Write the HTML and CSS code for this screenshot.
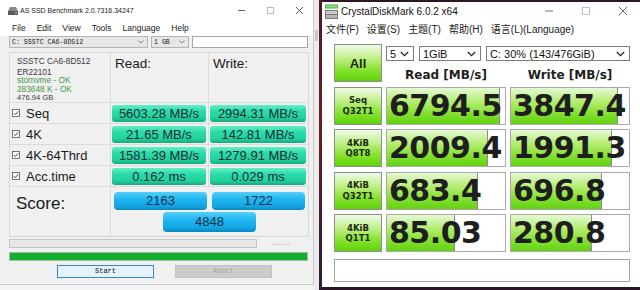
FILE: index.html
```html
<!DOCTYPE html>
<html>
<head>
<meta charset="utf-8">
<title>Benchmarks</title>
<link rel="stylesheet" href="styles.css">
</head>
<body>
<div class="desk">
  <div class="left">
    <section class="asw">
      <header class="tb">
        <svg class="asicon" viewBox="0 0 10 9"><path d="M2 1h6l2 4H0z" fill="#8a8a8a"/><rect x="0" y="5" width="10" height="4" fill="#5a5a5a"/><rect x="7" y="6.5" width="2" height="1" fill="#ccc"/></svg>
        <span class="ttl">AS SSD Benchmark 2.0.7316.34247</span>
        <span class="ctl">
          <svg viewBox="0 0 7 7"><path d="M0 3.5h7" stroke="#333" stroke-width="0.8"/></svg>
          <svg viewBox="0 0 7 7"><rect x="0.5" y="0.5" width="6" height="6" fill="none" stroke="#999" stroke-width="0.7"/></svg>
          <svg viewBox="0 0 7 7"><path d="M0 0L7 7M7 0L0 7" stroke="#333" stroke-width="0.8"/></svg>
        </span>
      </header>
      <nav class="menu"><span>File</span><span>Edit</span><span>View</span><span>Tools</span><span>Language</span><span>Help</span></nav>
      <div class="combos">
        <div class="cb drive"><span>C: SSSTC CA6-8D512</span><svg viewBox="0 0 6 4"><path d="M0.5 0.5L3 3L5.5 0.5" fill="none" stroke="#666" stroke-width="0.8"/></svg></div>
        <div class="cb size"><span>1 GB</span><svg viewBox="0 0 6 4"><path d="M0.5 0.5L3 3L5.5 0.5" fill="none" stroke="#666" stroke-width="0.8"/></svg></div>
        <div class="tf"></div>
      </div>
      <div class="panel">
        <div class="info">
          <div class="model">SSSTC CA6-8D512</div>
          <div>ER22101</div>
          <div class="ok">stornvme - OK</div>
          <div class="ok">283648 K - OK</div>
          <div class="cap">476.94 GB</div>
        </div>
        <div class="hd">Read:</div>
        <div class="hd">Write:</div>

        <div class="lbl"><svg class="chk" viewBox="0 0 8 8"><rect x="0.5" y="0.5" width="7" height="7" fill="#fff" stroke="#555" stroke-width="0.8"/><path d="M1.8 4L3.4 5.6L6.3 2.2" fill="none" stroke="#333" stroke-width="0.9"/></svg>Seq</div>
        <div class="cell"><div class="val">5603.28 MB/s</div></div>
        <div class="cell"><div class="val">2994.31 MB/s</div></div>

        <div class="lbl"><svg class="chk" viewBox="0 0 8 8"><rect x="0.5" y="0.5" width="7" height="7" fill="#fff" stroke="#555" stroke-width="0.8"/><path d="M1.8 4L3.4 5.6L6.3 2.2" fill="none" stroke="#333" stroke-width="0.9"/></svg>4K</div>
        <div class="cell"><div class="val">21.65 MB/s</div></div>
        <div class="cell"><div class="val">142.81 MB/s</div></div>

        <div class="lbl"><svg class="chk" viewBox="0 0 8 8"><rect x="0.5" y="0.5" width="7" height="7" fill="#fff" stroke="#555" stroke-width="0.8"/><path d="M1.8 4L3.4 5.6L6.3 2.2" fill="none" stroke="#333" stroke-width="0.9"/></svg>4K-64Thrd</div>
        <div class="cell"><div class="val">1581.39 MB/s</div></div>
        <div class="cell"><div class="val">1279.91 MB/s</div></div>

        <div class="lbl"><svg class="chk" viewBox="0 0 8 8"><rect x="0.5" y="0.5" width="7" height="7" fill="#fff" stroke="#555" stroke-width="0.8"/><path d="M1.8 4L3.4 5.6L6.3 2.2" fill="none" stroke="#333" stroke-width="0.9"/></svg>Acc.time</div>
        <div class="cell"><div class="val">0.162 ms</div></div>
        <div class="cell"><div class="val">0.029 ms</div></div>

        <div class="score-l">Score:</div>
        <div class="scores">
          <div class="sc">2163</div>
          <div class="sc">1722</div>
          <div class="sc tot">4848</div>
        </div>
      </div>
      <div class="progrow"><div class="prog"></div><span class="eta">--:--:--</span></div>
      <div class="gbar"></div>
      <div class="btns"><div class="btn start">Start</div><div class="btn abort">Abort</div></div>
    </section>
  </div>
  <div class="gap"><i></i></div>
  <div class="wall"></div>
  <section class="cdm">
    <header class="ctb">
      <svg class="cicon" viewBox="0 0 13 15"><rect x="0" y="0.5" width="13" height="4" fill="#3fb43f"/><rect x="1" y="1.5" width="11" height="2" fill="#8ee08e"/><rect x="0" y="6" width="13" height="9" fill="#7a7a7a"/><rect x="1" y="7" width="11" height="3" fill="#c9c9c9"/><rect x="1" y="11" width="11" height="3" fill="#b5b5b5"/></svg>
      <span class="cttl">CrystalDiskMark 6.0.2 x64</span>
      <span class="cctl">
        <svg viewBox="0 0 8 8"><path d="M0 4h8" stroke="#444" stroke-width="0.8"/></svg>
        <svg viewBox="0 0 8 8"><rect x="0.5" y="0.5" width="7" height="7" fill="none" stroke="#aaa" stroke-width="0.7"/></svg>
        <svg viewBox="0 0 8 8"><path d="M0 0L8 8M8 0L0 8" stroke="#444" stroke-width="0.8"/></svg>
      </span>
    </header>
    <nav class="cmenu"><span>文件(F)</span><span>设置(S)</span><span>主题(T)</span><span>帮助(H)</span><span>语言(L)(Language)</span></nav>
    <div class="cbody">
      <div class="grid">
        <div class="btn-g all">All</div>
        <div class="top">
          <div class="sels">
            <div class="sel s1"><span>5</span><svg viewBox="0 0 9 6"><path d="M0.8 1L4.5 4.7L8.2 1" fill="none" stroke="#222" stroke-width="1.2"/></svg></div>
            <div class="sel s2"><span>1GiB</span><svg viewBox="0 0 9 6"><path d="M0.8 1L4.5 4.7L8.2 1" fill="none" stroke="#222" stroke-width="1.2"/></svg></div>
            <div class="sel s3"><span>C: 30% (143/476GiB)</span><svg viewBox="0 0 9 6"><path d="M0.8 1L4.5 4.7L8.2 1" fill="none" stroke="#222" stroke-width="1.2"/></svg></div>
          </div>
          <div class="heads"><span>Read [MB/s]</span><span>Write [MB/s]</span></div>
        </div>

        <div class="btn-g tl"><span>Seq</span><span>Q32T1</span></div>
        <div class="vbox"><div class="fill" style="width:113px"></div><div class="num">6794.5</div></div>
        <div class="vbox"><div class="fill" style="width:107px"></div><div class="num">3847.4</div></div>

        <div class="btn-g tl"><span>4KiB</span><span>Q8T8</span></div>
        <div class="vbox"><div class="fill" style="width:101px"></div><div class="num">2009.4</div></div>
        <div class="vbox"><div class="fill" style="width:101px"></div><div class="num">1991.3</div></div>

        <div class="btn-g tl"><span>4KiB</span><span>Q32T1</span></div>
        <div class="vbox"><div class="fill" style="width:91px"></div><div class="num">683.4</div></div>
        <div class="vbox"><div class="fill" style="width:91px"></div><div class="num">696.8</div></div>

        <div class="btn-g tl"><span>4KiB</span><span>Q1T1</span></div>
        <div class="vbox"><div class="fill" style="width:68px"></div><div class="num">85.03</div></div>
        <div class="vbox"><div class="fill" style="width:81px"></div><div class="num">280.8</div></div>
      </div>
      <div class="comment"></div>
    </div>
  </section>
</div>
</body>
</html>
```

FILE: styles.css
```css
* { box-sizing: border-box; }
html, body { margin: 0; padding: 0; }
body {
  width: 640px;
  height: 290px;
  overflow: hidden;
  background: #2a1624;
  font-family: "Liberation Sans", Arial, sans-serif;
  color: #111;
}
.desk { display: flex; height: 290px; }

/* ---------- AS SSD ---------- */
.left { width: 314px; flex: none; background: #f4f4f4; }
.asw {
  height: 285px;
  background: #f0f0f0;
  border-right: 1px solid #c8c8c8;
  border-bottom: 1px solid #c8c8c8;
  display: flex;
  flex-direction: column;
}
.tb {
  height: 20px;
  background: #fff;
  display: flex;
  align-items: center;
  padding: 1px 0 0 8px;
}
.asicon { width: 10px; height: 9px; }
.ttl { margin-left: 2px; font-size: 7px; color: #1a1a1a; }
.ctl { margin-left: auto; margin-right: 10px; display: flex; gap: 22px; }
.ctl svg { width: 7px; height: 7px; display: block; }

.menu {
  height: 16px;
  background: #fff;
  display: flex;
  align-items: center;
  gap: 11px;
  padding-left: 12px;
  font-size: 8.5px;
  color: #1a1a1a;
}
.combos {
  display: flex;
  height: 12px;
  margin: 0 0 0 9px;
  gap: 3px;
}
.cb {
  display: flex;
  align-items: center;
  background: #e6e6e6;
  border: 1px solid #b4b4b4;
  font-family: "Liberation Mono", monospace;
  font-size: 6.6px;
  color: #222;
  padding: 0 3px 0 2px;
}
.cb span { flex: 1; }
.cb svg { width: 6px; height: 4px; }
.drive { width: 139px; }
.size { width: 38px; }
.tf { width: 116px; background: #fff; border: 1px solid #a8a8a8; }

.panel {
  margin: 4px 0 0 9px;
  width: 300px;
  display: grid;
  grid-template-columns: 100px 97px 99px;
  grid-template-rows: 49px 20px 20px 20px 20px 49px;
  gap: 1px;
  border: 1px solid #d6d6d6;
  background: #dedada;
}
.panel > div { background: #f0f0f0; }
.info {
  padding: 4px 0 0 7px;
  font-size: 8.3px;
  line-height: 8.7px;
  color: #3a3a3a;
}
.info .model { margin-bottom: 2px; }
.info .ok { color: #3d9a47; }
.info .cap { font-size: 7.6px; }
.hd { font-size: 13.5px; padding: 3px 0 0 4px; color: #1a1a1a; }
.lbl {
  display: flex;
  align-items: center;
  font-size: 13px;
  color: #1a1a1a;
  padding-left: 2px;
}
.chk { width: 8px; height: 8px; margin-right: 6px; }
.cell { display: flex; align-items: center; padding: 0 2px 0 1px; }
.cell .val {
  flex: 1;
  height: 17px;
  border-radius: 3px;
  background: linear-gradient(#62efc6 0%, #2cdca8 35%, #22d29e 75%, #16a97d 100%);
  text-align: center;
  font-size: 13px;
  line-height: 17px;
  color: #1b2c38;
}
.score-l { font-size: 17px; padding: 7px 0 0 6px; color: #1a1a1a; }
.scores {
  grid-column: 2 / 4;
  display: grid;
  grid-template-columns: 93px 93px;
  column-gap: 5px;
  row-gap: 2px;
  justify-content: center;
  align-content: start;
  padding-top: 5px;
}
.sc {
  height: 18px;
  border-radius: 4px;
  background: linear-gradient(#52d0fb 0%, #22b6f1 40%, #12a5e2 80%, #0b86be 100%);
  text-align: center;
  font-size: 13px;
  line-height: 18px;
  color: #12324c;
}
.sc.tot { grid-column: 1 / 3; justify-self: center; width: 93px; height: 20px; line-height: 20px; }

.progrow { display: flex; align-items: center; margin: 2px 0 0 9px; height: 9px; }
.prog { width: 248px; height: 9px; background: #e6e6e6; border: 1px solid #c4c4c4; }
.eta { margin-left: 15px; font-size: 5.5px; color: #777; letter-spacing: 0.5px; }
.gbar { margin: 4px 0 0 9px; width: 299px; height: 9px; background: #14af2c; border: 1px solid #9fbfa4; }
.btns { display: flex; gap: 21px; margin: 4px 0 0 57px; }
.btn {
  width: 97px;
  height: 13px;
  font-family: "Liberation Mono", monospace;
  font-size: 7px;
  line-height: 11px;
  text-align: center;
}
.start { background: #e5f1fb; border: 1px solid #3b86c8; color: #111; }
.abort { background: #cccccc; border: 1px solid #c2c2c2; color: #a2a2a2; }

/* ---------- gap / wallpaper ---------- */
.gap { width: 5px; flex: none; background: #ebebeb; }
.gap i { display: block; width: 3px; height: 11px; margin: 30px 0 0 1px; background: #c7c7c7; }
.wall { width: 3px; flex: none; background: linear-gradient(#4a1a2a, #6a1f22 40%, #2d1b3a); }

/* ---------- CrystalDiskMark ---------- */
.cdm {
  flex: 1;
  margin-top: 2px;
  height: 285px;
  background: #fff;
  display: flex;
  flex-direction: column;
}
.ctb { height: 18px; display: flex; align-items: center; padding-left: 3px; }
.cicon { width: 13px; height: 15px; }
.cttl { margin-left: 3px; font-size: 10px; color: #111; }
.cctl { margin-left: auto; margin-right: 13px; display: flex; gap: 29px; }
.cctl svg { width: 8px; height: 8px; display: block; }
.cmenu {
  height: 17px;
  display: flex;
  align-items: center;
  gap: 8px;
  padding-left: 4px;
  font-family: "Liberation Sans", "Noto Sans CJK SC", sans-serif;
  font-size: 10px;
  color: #222;
}
.cbody { padding: 7px 10px 0 12px; }
.grid {
  display: grid;
  grid-template-columns: 48px 120px 120px;
  grid-template-rows: repeat(5, 38px);
  column-gap: 4px;
  row-gap: 4.5px;
}
.btn-g {
  border: 1px solid #8e8e8e;
  background: linear-gradient(#eefbe6 0%, #c2f08c 35%, #86e22e 70%, #5fd20a 100%);
  display: flex;
  flex-direction: column;
  align-items: center;
  justify-content: center;
  font-family: "DejaVu Sans", sans-serif;
  font-weight: bold;
  color: #1c2a10;
}
.all { font-family: "Liberation Sans", sans-serif; font-size: 13px; }
.tl { font-size: 8.5px; line-height: 10.5px; }
.top { grid-column: 2 / 4; display: flex; flex-direction: column; }
.sels { display: flex; gap: 5px; margin-top: 2px; height: 16px; }
.sel {
  display: flex;
  align-items: center;
  border: 1px solid #7d7d7d;
  background: #fff;
  font-size: 11px;
  color: #111;
  padding: 0 4px 0 3px;
}
.sel span { flex: 1; }
.sel svg { width: 9px; height: 6px; }
.s1 { width: 28px; }
.s2 { width: 62px; }
.s3 { width: 144px; }
.heads {
  display: grid;
  grid-template-columns: 120px 120px;
  column-gap: 4px;
  text-align: center;
  font-family: "DejaVu Sans", sans-serif;
  font-weight: bold;
  font-size: 12px;
  color: #1e1e1e;
  margin-top: 7px;
}
.vbox {
  display: grid;
  border: 1px solid #a9a9a9;
  background: #fff;
  overflow: hidden;
}
.fill {
  grid-area: 1 / 1;
  height: 100%;
  border-right: 1px solid #8c8c8c;
  background: linear-gradient(#e6f9d8 0%, #b8ee78 35%, #86e033 70%, #62d212 100%);
}
.num {
  grid-area: 1 / 1;
  align-self: center;
  padding-left: 2px;
  font-family: "DejaVu Sans", sans-serif;
  font-weight: bold;
  font-size: 30px;
  letter-spacing: -0.5px;
  line-height: 36px;
  color: #1e1e1e;
  white-space: nowrap;
}
.comment {
  margin-top: 7px;
  width: 296px;
  height: 23px;
  border: 1px solid #a3a3a3;
  background: #fff;
}
```
